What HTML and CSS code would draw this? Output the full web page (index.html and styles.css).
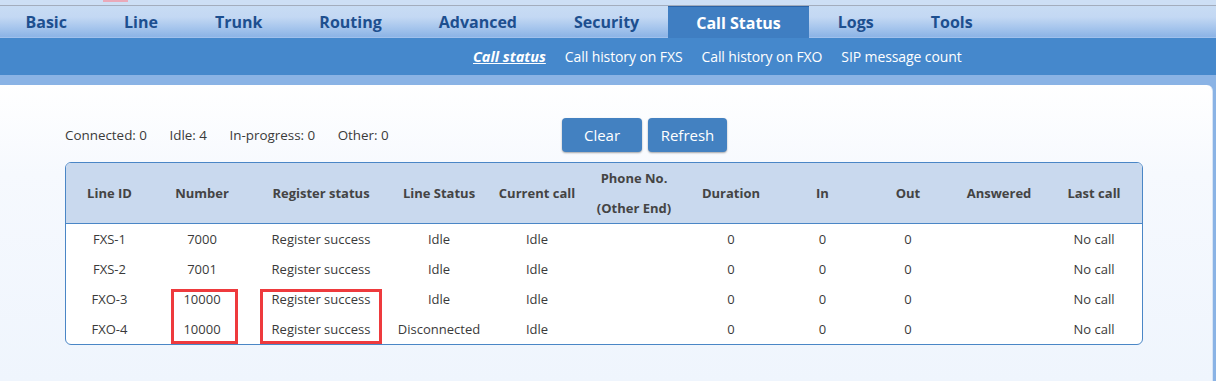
FILE: index.html
```html
<!DOCTYPE html>
<html>
<head>
<meta charset="utf-8">
<link rel="stylesheet" href="styles.css">
</head>
<body>
<div class="topstrip"><span class="pink"></span></div>
<nav class="mainnav">
  <a class="tab">Basic</a>
  <a class="tab">Line</a>
  <a class="tab">Trunk</a>
  <a class="tab">Routing</a>
  <a class="tab">Advanced</a>
  <a class="tab">Security</a>
  <a class="tab active">Call Status</a>
  <a class="tab">Logs</a>
  <a class="tab">Tools</a>
</nav>
<nav class="subnav">
  <a class="sub current">Call status</a>
  <a class="sub">Call history on FXS</a>
  <a class="sub">Call history on FXO</a>
  <a class="sub">SIP message count</a>
</nav>
<div class="band">
  <main class="panel">
    <div class="toolbar">
      <div class="stats">
        <span>Connected: 0</span>
        <span>Idle: 4</span>
        <span>In-progress: 0</span>
        <span>Other: 0</span>
      </div>
      <div class="buttons">
        <button class="btn">Clear</button>
        <button class="btn">Refresh</button>
      </div>
    </div>
    <div class="tablewrap">
      <table class="grid">
        <colgroup>
          <col class="c1"><col class="c2"><col class="c3"><col class="c4"><col class="c5"><col class="c6"><col class="c7"><col class="c8"><col class="c9"><col class="c10"><col class="c11">
        </colgroup>
        <thead>
          <tr>
            <th>Line ID</th><th>Number</th><th>Register status</th><th>Line Status</th><th>Current call</th><th>Phone No.<br>(Other End)</th><th>Duration</th><th>In</th><th>Out</th><th>Answered</th><th>Last call</th>
          </tr>
        </thead>
        <tbody>
          <tr><td>FXS-1</td><td>7000</td><td>Register success</td><td>Idle</td><td>Idle</td><td></td><td>0</td><td>0</td><td>0</td><td></td><td>No call</td></tr>
          <tr><td>FXS-2</td><td>7001</td><td>Register success</td><td>Idle</td><td>Idle</td><td></td><td>0</td><td>0</td><td>0</td><td></td><td>No call</td></tr>
          <tr><td>FXO-3</td><td>10000</td><td>Register success</td><td>Idle</td><td>Idle</td><td></td><td>0</td><td>0</td><td>0</td><td></td><td>No call</td></tr>
          <tr><td>FXO-4</td><td>10000</td><td>Register success</td><td>Disconnected</td><td>Idle</td><td></td><td>0</td><td>0</td><td>0</td><td></td><td>No call</td></tr>
        </tbody>
      </table>
      <div class="mark mark-number"></div>
      <div class="mark mark-status"></div>
    </div>
  </main>
</div>
</body>
</html>
```

FILE: styles.css
```css
* { box-sizing: border-box; }
html, body { margin: 0; padding: 0; }
body {
  width: 1216px;
  height: 381px;
  overflow: hidden;
  font-family: "Open Sans", "Noto Sans", sans-serif;
  background: #8ab3e5;
}
.topstrip {
  height: 6px;
  background: #cddff5;
  border-bottom: 1px solid #a3adbd;
  position: relative;
}
.pink {
  position: absolute;
  left: 103px;
  top: 0;
  width: 25px;
  height: 2px;
  background: #e9a9b9;
}
.mainnav {
  height: 32px;
  display: flex;
  align-items: stretch;
  padding-left: 0;
  margin-left: -3px;
  background: linear-gradient(to bottom, #c8dcf4 0%, #c3d8f3 35%, #a4c4ec 70%, #8db4e6 95%, #a9c6ee 100%);
}
.tab {
  display: flex;
  align-items: center;
  padding: 0 28.5px;
  font-size: 16px;
  font-weight: 700;
  color: #1d4f8f;
}
.tab.active {
  background: #3f7ec2;
  border-top: 1px solid #2b63a6;
  color: #ffffff;
}
.subnav {
  height: 37px;
  background: #4588cc;
  display: flex;
  align-items: center;
  padding-left: 473px;
  gap: 19px;
}
.sub {
  color: #ffffff;
  font-size: 14px;
  letter-spacing: -0.1px;
}
.sub.current {
  font-weight: 700;
  font-style: italic;
  text-decoration: underline;
  font-size: 14.5px;
  letter-spacing: 0;
}
.band {
  padding-top: 10px;
  height: 306px;
  background: #8ab3e5;
}
.panel {
  margin-right: 3px;
  height: 296px;
  border-top-right-radius: 6px;
  background: linear-gradient(to bottom, #ffffff 0%, #f6f9fe 30%, #eff5fd 100%);
  padding: 33px 0 0 65px;
  border-right: 1px solid #d6e4f6;
}
.toolbar {
  display: flex;
  align-items: center;
  height: 34px;
}
.stats {
  width: 497px;
  display: flex;
  gap: 22.5px;
  font-size: 13.4px;
  color: #3a3a3a;
}
.buttons {
  display: flex;
  gap: 6px;
}
.btn {
  height: 34px;
  width: 80px;
  border: none;
  border-radius: 4px;
  background: #4381c1;
  color: #ffffff;
  font-family: "Open Sans", "Noto Sans", sans-serif;
  font-size: 15px;
  box-shadow: 0 1px 2px rgba(0, 0, 0, 0.35);
  padding: 0;
}
.btn + .btn { width: 79px; }
.tablewrap {
  position: relative;
  margin-top: 10px;
  width: 1078px;
}
.grid {
  width: 1078px;
  border-collapse: separate;
  border-spacing: 0;
  border: 1px solid #4a86c6;
  border-radius: 6px;
  overflow: hidden;
  table-layout: fixed;
  background: #ffffff;
}
.c1 { width: 87px; }
.c2 { width: 98px; }
.c3 { width: 140px; }
.c4 { width: 96px; }
.c5 { width: 100px; }
.c6 { width: 94px; }
.c7 { width: 100px; }
.c8 { width: 83px; }
.c9 { width: 88px; }
.c10 { width: 94px; }
.c11 { width: 96px; }
.grid th {
  background: #c9d9ee;
  height: 60px;
  line-height: 30px;
  font-size: 13px;
  font-weight: 700;
  color: #444444;
  padding: 0;
  border-bottom: 1px solid #4a86c6;
  text-align: center;
}
.grid td {
  height: 30px;
  padding: 0;
  text-align: center;
  font-size: 13px;
  color: #3a3a3a;
}
.mark {
  position: absolute;
  border: 3px solid #ee3a3d;
}
.mark-number {
  left: 106px;
  top: 127px;
  width: 67px;
  height: 55px;
}
.mark-status {
  left: 195px;
  top: 127px;
  width: 122px;
  height: 55px;
}
```
